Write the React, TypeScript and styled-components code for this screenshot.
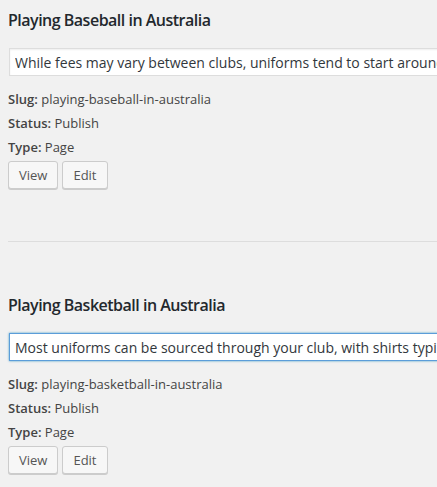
import React from "react";
import styled, { createGlobalStyle } from "styled-components";

const Global = createGlobalStyle`
  html, body { margin: 0; padding: 0; background: #f1f1f1; }
  body { font-family: "Open Sans", sans-serif; color: #444; font-size: 13px; }
`;

const Page = styled.div`
  width: 437px;
  height: 487px;
  overflow: hidden;
  padding: 0 0 0 8px;
  box-sizing: border-box;
`;

const Item = styled.section`
  display: flex;
  flex-direction: column;
  padding-top: 8px;
`;

const Title = styled.h2`
  margin: 0;
  font-family: "Open Sans", sans-serif;
  font-size: 16px;
  letter-spacing: -0.5px;
  line-height: 25px;
  font-weight: 600;
  color: #23282d;
  white-space: nowrap;
`;

const Field = styled.input<{ $focus?: boolean }>`
  margin: 15px 0 0 1px;
  width: 640px;
  box-sizing: border-box;
  height: 28px;
  padding: 3px 5px;
  font-family: "Open Sans", sans-serif;
  font-size: 14px;
  line-height: 19.6px;
  color: #32373c;
  background: #fff;
  border: 1px solid ${(p) => (p.$focus ? "#5b9dd9" : "#ddd")};
  box-shadow: ${(p) =>
    p.$focus ? "0 0 2px rgba(30,140,190,0.8)" : "inset 0 1px 2px rgba(0,0,0,0.07)"};
  outline: none;
`;

const Meta = styled.div`
  margin-top: 11px;
  display: flex;
  flex-direction: column;
`;

const MetaLine = styled.div`
  font-size: 13px;
  line-height: 24px;
  color: #444;
  white-space: nowrap;
  b { font-weight: 600; }
`;

const Actions = styled.div`
  display: flex;
  gap: 4px;
  margin-top: 2px;
`;

const Button = styled.button`
  height: 28px;
  line-height: 26px;
  padding: 0 10px 1px;
  font-family: "Open Sans", sans-serif;
  font-size: 13px;
  color: #555;
  background: #f7f7f7;
  border: 1px solid #ccc;
  border-radius: 3px;
  box-shadow: 0 1px 0 #ccc;
  box-sizing: border-box;
  cursor: pointer;
`;

const Divider = styled.hr`
  margin: 52px 0 0;
  border: 0;
  border-top: 1px solid #ddd;
  height: 0;
`;

const Spacer = styled.div`
  height: 43px;
`;

const items = [
  {
    title: "Playing Baseball in Australia",
    text: "While fees may vary between clubs, uniforms tend to start around $50 and up",
    slug: "playing-baseball-in-australia",
    focus: false,
  },
  {
    title: "Playing Basketball in Australia",
    text: "Most uniforms can be sourced through your club, with shirts typically costing",
    slug: "playing-basketball-in-australia",
    focus: true,
  },
];

export default function App() {
  return (
    <Page>
      <Global />
      {items.map((it, i) => (
        <React.Fragment key={it.slug}>
          {i > 0 && <Spacer />}
          <Item>
            <Title>{it.title}</Title>
            <Field $focus={it.focus} defaultValue={it.text} readOnly />
            <Meta>
              <MetaLine><b>Slug:</b> {it.slug}</MetaLine>
              <MetaLine><b>Status:</b> Publish</MetaLine>
              <MetaLine><b>Type:</b> Page</MetaLine>
            </Meta>
            <Actions>
              <Button>View</Button>
              <Button>Edit</Button>
            </Actions>
          </Item>
          {i === 0 && <Divider />}
        </React.Fragment>
      ))}
    </Page>
  );
}
